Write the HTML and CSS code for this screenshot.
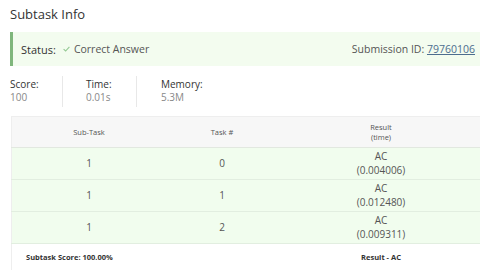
FILE: index.html
```html
<!DOCTYPE html>
<html lang="en">
<head>
  <meta charset="utf-8">
  <title>Subtask Info</title>
  <link rel="stylesheet" href="styles.css">
</head>
<body>
  <h2 class="title">Subtask Info</h2>

  <!-- Status bar -->
  <div class="status">
    <div class="status-left">
      <span class="status-label">Status:</span>
      <svg class="check" width="7" height="6" viewBox="0 0 7 6"><path d="M0.6 3.2 L2.6 5 L6.4 0.8" fill="none" stroke="#93c892" stroke-width="1.1"/></svg>
      <span class="status-text">Correct Answer</span>
    </div>
    <div class="status-right">Submission ID: <a href="#">79760106</a></div>
  </div>

  <!-- Stats -->
  <div class="stats">
    <div class="stat stat-score"><div class="stat-label">Score:</div><div class="stat-value">100</div></div>
    <div class="stat stat-time"><div class="stat-label">Time:</div><div class="stat-value">0.01s</div></div>
    <div class="stat stat-mem"><div class="stat-label">Memory:</div><div class="stat-value">5.3M</div></div>
  </div>

  <!-- Subtask table -->
  <div class="table-wrap">
    <table class="subtasks">
      <thead>
        <tr>
          <th class="col-sub">Sub-Task</th>
          <th class="col-task">Task #</th>
          <th class="col-res">Result<br>(time)</th>
        </tr>
      </thead>
      <tbody>
        <tr><td>1</td><td>0</td><td>AC<br>(0.004006)</td></tr>
        <tr><td>1</td><td>1</td><td>AC<br>(0.012480)</td></tr>
        <tr><td>1</td><td>2</td><td>AC<br>(0.009311)</td></tr>
      </tbody>
      <tfoot>
        <tr>
          <td colspan="2" class="foot-score">Subtask Score: 100.00%</td>
          <td class="foot-res">Result - AC</td>
        </tr>
      </tfoot>
    </table>
  </div>
</body>
</html>
```

FILE: styles.css
```css
body { font-family: "Open Sans", sans-serif; margin: 0; padding: 0 0 0 10px; background-color: white; color: #333; overflow: hidden; width: 470px; }
.title { font-size: 13px; font-weight: 500; margin: 0; padding-top: 5px; line-height: 18px; color: #333; }

.status { margin-top: 9px; height: 34px; display: flex; align-items: center; justify-content: space-between; background: #f3fcef; border-left: 3px solid #7fb67c; padding: 0 5px 0 8px; font-size: 10.5px; }
.status-left { display: flex; align-items: center; }
.status-label { font-weight: 500; color: #333; font-size: 11px; }
.check { margin: 0 4px 0 7px; }
.status-text { color: #555; }
.status-right { color: #555; }
.status-right a { color: #4d6d8e; text-decoration: underline; }

.stats { display: flex; margin-top: 10px; font-size: 10px; line-height: 13px; }
.stat { border-right: 1px solid #e8e8e8; padding: 2px 0 3px 0; }
.stat-score { width: 52px; }
.stat-time { width: 50px; padding-left: 23px; }
.stat-mem { padding-left: 24px; border-right: none; }
.stat-label { color: #333; }
.stat-value { color: #888; }

.table-wrap { margin-top: 9px; margin-left: 1px; }
.subtasks { border-collapse: collapse; width: 472px; table-layout: fixed; border-left: 1px solid #eee; border-top: 1px solid #eee; color: #555; }
.col-sub { width: 154px; }
.col-task { width: 112px; }
.col-res { width: 206px; }
.subtasks th { background: #f7f7f7; font-weight: normal; font-size: 7.5px; line-height: 10.5px; height: 30px; padding: 0; border-bottom: 1px solid #e2e8e0; }
.subtasks td { text-align: center; padding: 0; }
.subtasks tbody td { background: #f1fdee; height: 31px; font-size: 10px; line-height: 13.5px; border-bottom: 1px solid #e2eee0; }
.subtasks tfoot td { font-weight: bold; font-size: 7.5px; height: 26px; color: #333; }
.subtasks .foot-score { text-align: left; padding-left: 14px; }
```
